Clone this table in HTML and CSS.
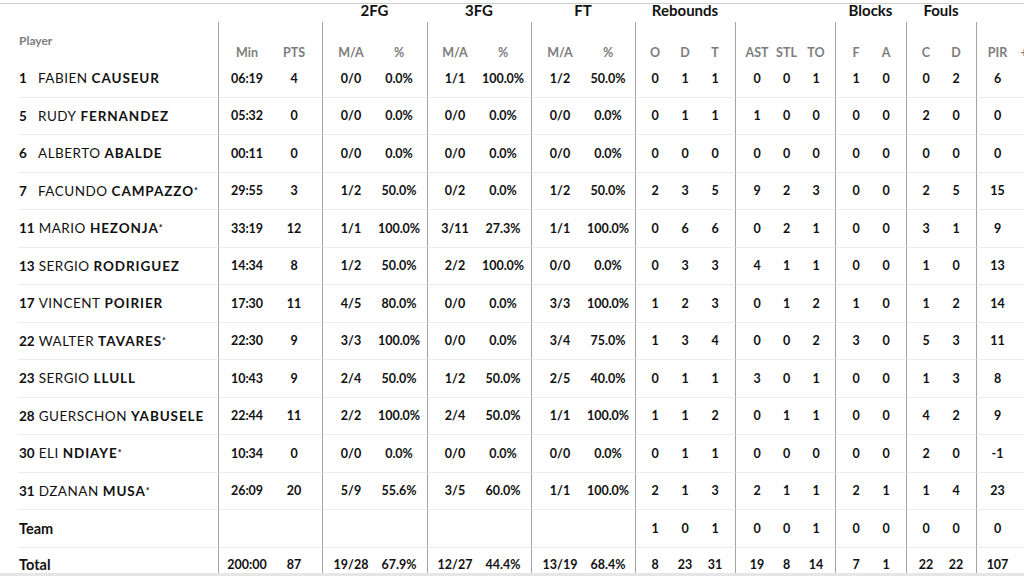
FILE: index.html
```html
<!DOCTYPE html>
<html lang="en">
<head>
<meta charset="utf-8">
<title>Box score</title>
<link rel="stylesheet" href="styles.css">
</head>
<body>
<div class="page">
  <div class="box">
    <div class="groups">
      <div class="gh span-lead"></div>
      <div class="gh span2">2FG</div>
      <div class="gh span2">3FG</div>
      <div class="gh span2">FT</div>
      <div class="gh span3">Rebounds</div>
      <div class="gh span3"></div>
      <div class="gh span2">Blocks</div>
      <div class="gh span2">Fouls</div>
      <div class="gh span2"></div>
    </div>
    <div class="row head">
      <div class="pl">Player</div><div>Min</div><div>PTS</div><div>M/A</div><div>%</div><div>M/A</div><div>%</div><div>M/A</div><div>%</div><div>O</div><div>D</div><div>T</div><div>AST</div><div>STL</div><div>TO</div><div>F</div><div>A</div><div>C</div><div>D</div><div>PIR</div><div>+</div>
    </div>
    <div class="row data">
      <div class="pl"><span class="no">1</span><span class="fn">FABIEN</span><b>CAUSEUR</b></div><div>06:19</div><div>4</div><div>0/0</div><div>0.0%</div><div>1/1</div><div>100.0%</div><div>1/2</div><div>50.0%</div><div>0</div><div>1</div><div>1</div><div>0</div><div>0</div><div>1</div><div>1</div><div>0</div><div>0</div><div>2</div><div>6</div><div></div>
    </div>
    <div class="row data">
      <div class="pl"><span class="no">5</span><span class="fn">RUDY</span><b>FERNANDEZ</b></div><div>05:32</div><div>0</div><div>0/0</div><div>0.0%</div><div>0/0</div><div>0.0%</div><div>0/0</div><div>0.0%</div><div>0</div><div>1</div><div>1</div><div>1</div><div>0</div><div>0</div><div>0</div><div>0</div><div>2</div><div>0</div><div>0</div><div></div>
    </div>
    <div class="row data">
      <div class="pl"><span class="no">6</span><span class="fn">ALBERTO</span><b>ABALDE</b></div><div>00:11</div><div>0</div><div>0/0</div><div>0.0%</div><div>0/0</div><div>0.0%</div><div>0/0</div><div>0.0%</div><div>0</div><div>0</div><div>0</div><div>0</div><div>0</div><div>0</div><div>0</div><div>0</div><div>0</div><div>0</div><div>0</div><div></div>
    </div>
    <div class="row data">
      <div class="pl"><span class="no">7</span><span class="fn">FACUNDO</span><b>CAMPAZZO</b><sup class="st">*</sup></div><div>29:55</div><div>3</div><div>1/2</div><div>50.0%</div><div>0/2</div><div>0.0%</div><div>1/2</div><div>50.0%</div><div>2</div><div>3</div><div>5</div><div>9</div><div>2</div><div>3</div><div>0</div><div>0</div><div>2</div><div>5</div><div>15</div><div></div>
    </div>
    <div class="row data">
      <div class="pl"><span class="no">11</span><span class="fn">MARIO</span><b>HEZONJA</b><sup class="st">*</sup></div><div>33:19</div><div>12</div><div>1/1</div><div>100.0%</div><div>3/11</div><div>27.3%</div><div>1/1</div><div>100.0%</div><div>0</div><div>6</div><div>6</div><div>0</div><div>2</div><div>1</div><div>0</div><div>0</div><div>3</div><div>1</div><div>9</div><div></div>
    </div>
    <div class="row data">
      <div class="pl"><span class="no">13</span><span class="fn">SERGIO</span><b>RODRIGUEZ</b></div><div>14:34</div><div>8</div><div>1/2</div><div>50.0%</div><div>2/2</div><div>100.0%</div><div>0/0</div><div>0.0%</div><div>0</div><div>3</div><div>3</div><div>4</div><div>1</div><div>1</div><div>0</div><div>0</div><div>1</div><div>0</div><div>13</div><div></div>
    </div>
    <div class="row data">
      <div class="pl"><span class="no">17</span><span class="fn">VINCENT</span><b>POIRIER</b></div><div>17:30</div><div>11</div><div>4/5</div><div>80.0%</div><div>0/0</div><div>0.0%</div><div>3/3</div><div>100.0%</div><div>1</div><div>2</div><div>3</div><div>0</div><div>1</div><div>2</div><div>1</div><div>0</div><div>1</div><div>2</div><div>14</div><div></div>
    </div>
    <div class="row data">
      <div class="pl"><span class="no">22</span><span class="fn">WALTER</span><b>TAVARES</b><sup class="st">*</sup></div><div>22:30</div><div>9</div><div>3/3</div><div>100.0%</div><div>0/0</div><div>0.0%</div><div>3/4</div><div>75.0%</div><div>1</div><div>3</div><div>4</div><div>0</div><div>0</div><div>2</div><div>3</div><div>0</div><div>5</div><div>3</div><div>11</div><div></div>
    </div>
    <div class="row data">
      <div class="pl"><span class="no">23</span><span class="fn">SERGIO</span><b>LLULL</b></div><div>10:43</div><div>9</div><div>2/4</div><div>50.0%</div><div>1/2</div><div>50.0%</div><div>2/5</div><div>40.0%</div><div>0</div><div>1</div><div>1</div><div>3</div><div>0</div><div>1</div><div>0</div><div>0</div><div>1</div><div>3</div><div>8</div><div></div>
    </div>
    <div class="row data">
      <div class="pl"><span class="no">28</span><span class="fn">GUERSCHON</span><b>YABUSELE</b></div><div>22:44</div><div>11</div><div>2/2</div><div>100.0%</div><div>2/4</div><div>50.0%</div><div>1/1</div><div>100.0%</div><div>1</div><div>1</div><div>2</div><div>0</div><div>1</div><div>1</div><div>0</div><div>0</div><div>4</div><div>2</div><div>9</div><div></div>
    </div>
    <div class="row data">
      <div class="pl"><span class="no">30</span><span class="fn">ELI</span><b>NDIAYE</b><sup class="st">*</sup></div><div>10:34</div><div>0</div><div>0/0</div><div>0.0%</div><div>0/0</div><div>0.0%</div><div>0/0</div><div>0.0%</div><div>0</div><div>1</div><div>1</div><div>0</div><div>0</div><div>0</div><div>0</div><div>0</div><div>2</div><div>0</div><div>-1</div><div></div>
    </div>
    <div class="row data">
      <div class="pl"><span class="no">31</span><span class="fn">DZANAN</span><b>MUSA</b><sup class="st">*</sup></div><div>26:09</div><div>20</div><div>5/9</div><div>55.6%</div><div>3/5</div><div>60.0%</div><div>1/1</div><div>100.0%</div><div>2</div><div>1</div><div>3</div><div>2</div><div>1</div><div>1</div><div>2</div><div>1</div><div>1</div><div>4</div><div>23</div><div></div>
    </div>
    <div class="row data">
      <div class="pl label">Team</div><div></div><div></div><div></div><div></div><div></div><div></div><div></div><div></div><div>1</div><div>0</div><div>1</div><div>0</div><div>0</div><div>1</div><div>0</div><div>0</div><div>0</div><div>0</div><div>0</div><div></div>
    </div>
    <div class="row data">
      <div class="pl label">Total</div><div>200:00</div><div>87</div><div>19/28</div><div>67.9%</div><div>12/27</div><div>44.4%</div><div>13/19</div><div>68.4%</div><div>8</div><div>23</div><div>31</div><div>19</div><div>8</div><div>14</div><div>7</div><div>1</div><div>22</div><div>22</div><div>107</div><div></div>
    </div>
  </div>
</div>
<div class="scrollbar"></div>
</body>
</html>
```

FILE: styles.css
```css
* { box-sizing: border-box; }
html, body { margin: 0; padding: 0; }
body {
  background: #fff;
  font-family: Lato, "Liberation Sans", sans-serif;
  color: #111;
  overflow: hidden;
  width: 1024px;
  height: 576px;
}
.page {
  margin-top: 3px;
  border-top: 1px solid #cfcfcf;
  padding-left: 18px;
  width: 1024px;
}
.box {
  display: grid;
  width: 1012px;
  grid-template-columns: 200px 53px 51px 53px 52px 52px 52px 53px 51px 35px 30px 35px 37px 29px 34px 36px 35px 35px 35px 42px 12px;
  grid-template-rows: 18px 38px;
  grid-auto-rows: 37.5px;
}
.groups, .row { display: contents; }
.gh {
  font-weight: 700;
  font-size: 15px;
  line-height: 12px;
  text-align: center;
  color: #111;
  white-space: nowrap;
}
.span-lead { grid-column: span 3; }
.span2 { grid-column: span 2; }
.span3 { grid-column: span 3; }

.row > div {
  display: flex;
  align-items: center;
  justify-content: center;
  font-size: 12.5px;
  font-weight: 700;
  white-space: nowrap;
}
.row > :nth-child(2),
.row > :nth-child(4),
.row > :nth-child(6),
.row > :nth-child(8),
.row > :nth-child(10),
.row > :nth-child(13),
.row > :nth-child(16),
.row > :nth-child(18),
.row > :nth-child(20) { border-left: 1px solid #a3a3a3; }

.row > :nth-child(2) { padding-left: 4px; }
.row > :nth-child(3) { padding-right: 5px; }
.row > :nth-child(4) { padding-left: 4px; }
.row > :nth-child(5) { padding-right: 4px; }
.row > :nth-child(6) { padding-left: 3px; }
.row > :nth-child(7) { padding-right: 4px; }
.row > :nth-child(8) { padding-left: 4px; }
.row > :nth-child(9) { padding-right: 3px; }
.row > :nth-child(10) { padding-left: 4px; }
.row > :nth-child(12) { padding-right: 5px; }
.row > :nth-child(13) { padding-left: 6px; }
.row > :nth-child(15) { padding-right: 4px; }
.row > :nth-child(16) { padding-left: 5px; }
.row > :nth-child(17) { padding-right: 5px; }
.row > :nth-child(18) { padding-left: 4px; }
.row > :nth-child(19) { padding-right: 5px; }

.head > div {
  align-items: flex-end;
  line-height: 14px;
  color: #7d7d7d;
  font-size: 12.5px;
}
.head > .pl {
  align-items: center;
  font-size: 12px;
}
.row > .pl {
  justify-content: flex-start;
  padding-left: 1px;
}
.data > div {
  border-bottom: 1px solid #ececec;
  color: #111;
}
.data:last-child > div { border-bottom: none; padding-bottom: 3px; }

.no {
  font-weight: 700;
  font-size: 13.5px;
  min-width: 15px;
  margin-right: 4px;
}
.fn {
  font-weight: 400;
  font-size: 13.5px;
  letter-spacing: 0.5px;
  margin-right: 4px;
}
.pl b {
  font-weight: 700;
  font-size: 13.5px;
  letter-spacing: 0.9px;
}
.st {
  font-size: 9px;
  font-weight: 700;
  margin-left: 0;
  align-self: flex-start;
  margin-top: 12px;
}
.label {
  font-size: 14.5px !important;
}
.scrollbar {
  position: fixed;
  left: 0;
  right: 0;
  bottom: 0;
  height: 3px;
  background: #e6e6e6;
}
```
